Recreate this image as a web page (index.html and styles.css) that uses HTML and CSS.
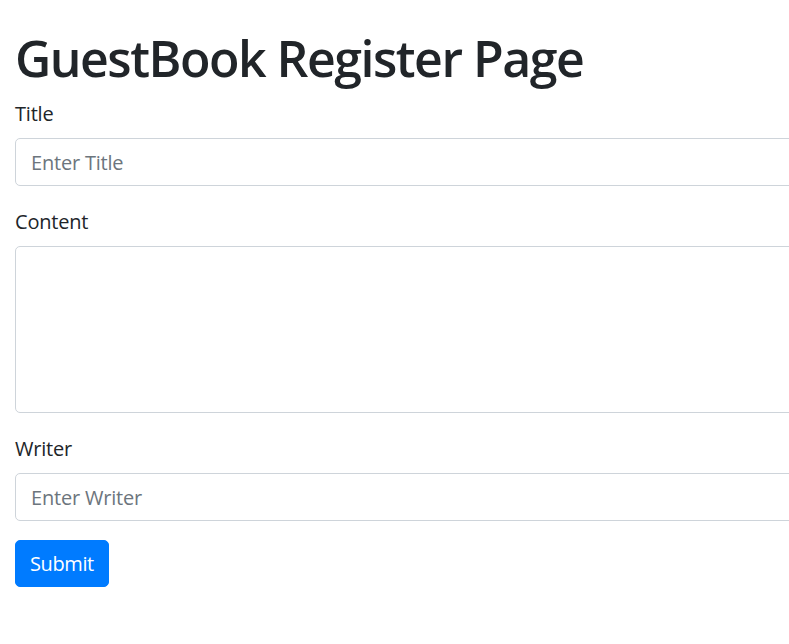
FILE: index.html
```html
<!DOCTYPE html>
<html lang="en">
<head>
<meta charset="utf-8">
<title>GuestBook Register Page</title>
<link rel="stylesheet" href="styles.css">
</head>
<body>
<div class="page">
  <h1 class="title">GuestBook Register Page</h1>
  <form class="form">
    <div class="group">
      <label class="label" for="title">Title</label>
      <input class="control" id="title" type="text" placeholder="Enter Title">
    </div>
    <div class="group">
      <label class="label" for="content">Content</label>
      <textarea class="control area" id="content"></textarea>
    </div>
    <div class="group last">
      <label class="label" for="writer">Writer</label>
      <input class="control" id="writer" type="text" placeholder="Enter Writer">
    </div>
    <button class="btn" type="button">Submit</button>
  </form>
</div>
</body>
</html>
```
FILE: styles.css
```css
html, body {
  margin: 0;
  padding: 0;
  background: #fff;
  overflow: hidden;
}
body {
  font-family: "Open Sans", "Noto Sans", sans-serif;
  font-size: 20px;
  line-height: 1.5;
  color: #212529;
}
.page {
  padding: 28px 0 0 15px;
  width: 900px;
}
.title {
  margin: 0 0 10px 0;
  font-size: 50px;
  font-weight: 600;
  letter-spacing: -1.5px;
  line-height: 60px;
}
.form {
  display: flex;
  flex-direction: column;
  align-items: flex-start;
}
.group {
  display: flex;
  flex-direction: column;
  width: 100%;
  margin-bottom: 20px;
}
.group.last {
  margin-bottom: 19px;
}
.label {
  line-height: 30px;
  margin-top: 1px;
  margin-bottom: 9px;
  letter-spacing: -0.2px;
}
.control {
  box-sizing: border-box;
  width: 100%;
  height: 48px;
  padding: 7px 15px;
  font-family: inherit;
  font-size: 20px;
  line-height: 30px;
  letter-spacing: -0.2px;
  color: #495057;
  background: #fff;
  border: 1px solid #ced4da;
  border-radius: 5px;
  outline: none;
}
.control::placeholder {
  color: #6c757d;
}
.area {
  height: 167px;
  resize: none;
}
.btn {
  box-sizing: border-box;
  height: 47px;
  padding: 0 14px;
  font-family: inherit;
  font-size: 20px;
  letter-spacing: -0.4px;
  color: #fff;
  background: #007bff;
  border: 1px solid #007bff;
  border-radius: 5px;
}
```
